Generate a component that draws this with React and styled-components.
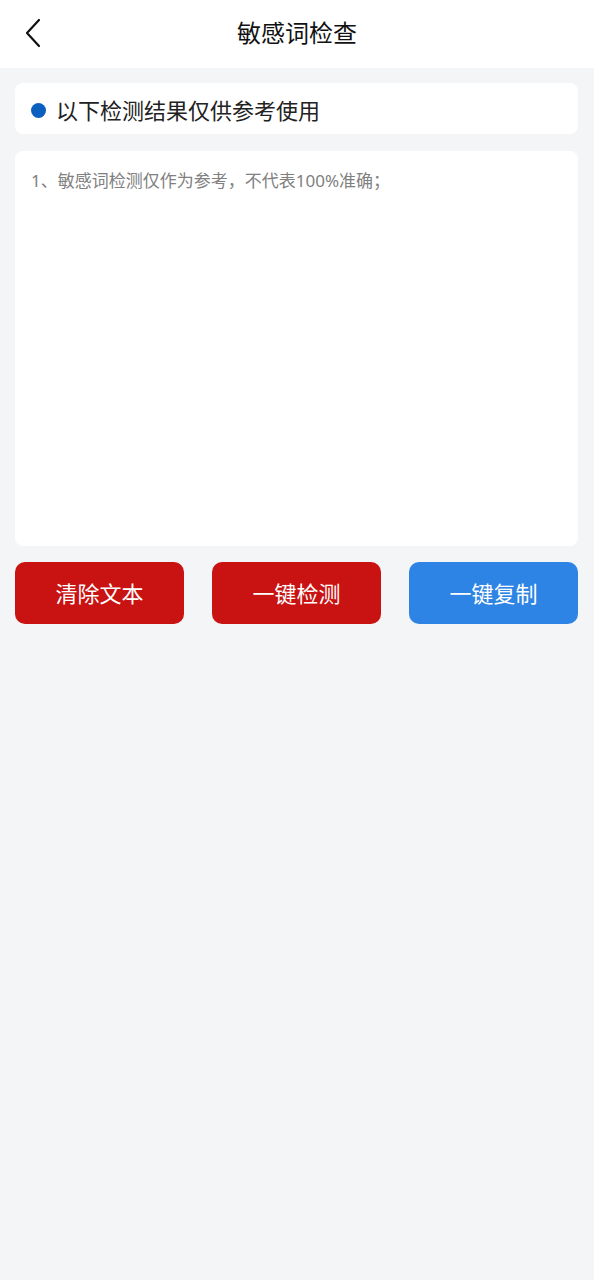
import React, { useState } from 'react';
import styled, { createGlobalStyle } from 'styled-components';

const GlobalStyle = createGlobalStyle`
  html, body {
    margin: 0;
    padding: 0;
    background: #f3f5f7;
  }
  * { box-sizing: border-box; }
  body {
    font-family: "Noto Sans", "Noto Sans CJK SC", sans-serif;
  }
`;

const Page = styled.div`
  min-height: 1280px;
  background: #f3f5f7;
`;

const Header = styled.div`
  height: 68px;
  background: #fff;
  display: grid;
  grid-template-columns: 68px 1fr 68px;
  align-items: center;
`;

const BackButton = styled.button`
  border: none;
  background: none;
  padding: 0 0 2px 22px;
  height: 68px;
  display: flex;
  align-items: center;
  cursor: pointer;
`;

const Title = styled.h1`
  margin: 0 0 6px;
  text-align: center;
  font-size: 24px;
  font-weight: 400;
  color: #111;
`;

const Body = styled.div`
  padding: 15px 16px 0 15px;
  display: flex;
  flex-direction: column;
  gap: 17px;
`;

const Notice = styled.div`
  height: 51px;
  background: #fff;
  border-radius: 8px;
  display: flex;
  align-items: center;
  gap: 10px;
  padding-left: 16px;
  font-size: 22px;
  color: #222;
`;

const Dot = styled.span`
  width: 15px;
  height: 15px;
  border-radius: 50%;
  background: #0b5fbf;
  flex-shrink: 0;
  margin-top: 4px;
`;

const TextBox = styled.textarea`
  height: 395px;
  border: none;
  border-radius: 8px;
  background: #fff;
  resize: none;
  outline: none;
  padding: 17px 16px;
  font-family: "Noto Sans", "Noto Sans CJK SC", sans-serif;
  font-size: 17px;
  line-height: 26px;
  color: #222;
  &::placeholder {
    color: #808080;
  }
`;

const Actions = styled.div`
  display: grid;
  grid-template-columns: repeat(3, 1fr);
  gap: 28px;
  margin-top: -1px;
`;

const ActionButton = styled.button`
  height: 62px;
  border: none;
  border-radius: 10px;
  background: ${(p) => (p.$blue ? '#2d84e4' : '#c91212')};
  color: #fff;
  font-family: "Noto Sans", "Noto Sans CJK SC", sans-serif;
  font-size: 22px;
  padding: 0 0 2px;
  cursor: pointer;
`;

export default function App() {
  const [text, setText] = useState('');

  return (
    <Page>
      <GlobalStyle />
      <Header>
        <BackButton aria-label="返回">
          <svg width="20" height="30" viewBox="0 0 20 30" fill="none">
            <path d="M17 2 L5 15 L17 28" stroke="#111" strokeWidth="2.2" strokeLinecap="round" strokeLinejoin="round" />
          </svg>
        </BackButton>
        <Title>敏感词检查</Title>
        <span />
      </Header>
      <Body>
        <Notice>
          <Dot />
          以下检测结果仅供参考使用
        </Notice>
        <TextBox
          value={text}
          onChange={(e) => setText(e.target.value)}
          placeholder="1、敏感词检测仅作为参考，不代表100%准确；"
        />
        <Actions>
          <ActionButton onClick={() => setText('')}>清除文本</ActionButton>
          <ActionButton>一键检测</ActionButton>
          <ActionButton $blue>一键复制</ActionButton>
        </Actions>
      </Body>
    </Page>
  );
}
